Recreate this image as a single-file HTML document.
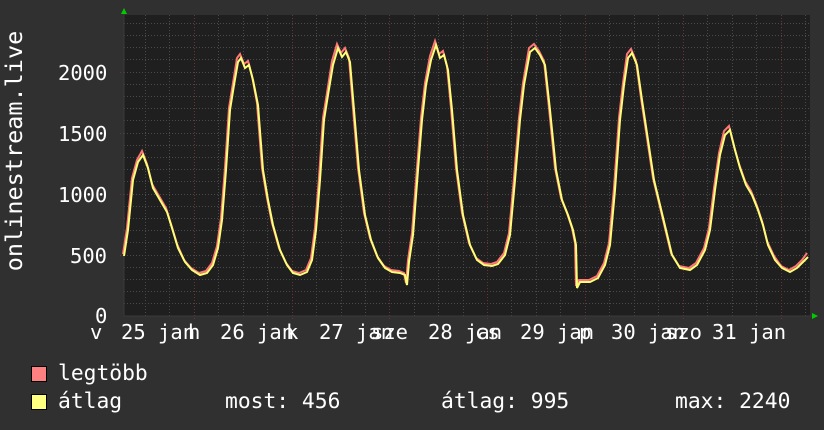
<!DOCTYPE html>
<html><head><meta charset="utf-8"><style>
html,body{margin:0;padding:0;background:#303030;}
body{width:824px;height:430px;overflow:hidden;position:relative;font-family:"DejaVu Sans Mono","Liberation Mono",monospace;color:#fff;}
.t{position:absolute;font-size:20.5px;line-height:1;white-space:pre;}
.l{font-size:21.3px;}
.sw{position:absolute;width:14px;height:14px;border:1px solid #000;}
</style></head><body>
<svg width="824" height="430" style="position:absolute;left:0;top:0">
<rect x="124" y="15" width="686" height="301" fill="#1f1f1f"/>
<g stroke="#4a4a4a" stroke-dasharray="1,2" stroke-width="1">
<line x1="124" x2="810" y1="303.5" y2="303.5"/><line x1="124" x2="810" y1="291.5" y2="291.5"/>
<line x1="124" x2="810" y1="279.5" y2="279.5"/><line x1="124" x2="810" y1="267.5" y2="267.5"/>
<line x1="124" x2="810" y1="255.5" y2="255.5"/><line x1="124" x2="810" y1="242.5" y2="242.5"/>
<line x1="124" x2="810" y1="230.5" y2="230.5"/><line x1="124" x2="810" y1="218.5" y2="218.5"/>
<line x1="124" x2="810" y1="206.5" y2="206.5"/><line x1="124" x2="810" y1="194.5" y2="194.5"/>
<line x1="124" x2="810" y1="181.5" y2="181.5"/><line x1="124" x2="810" y1="169.5" y2="169.5"/>
<line x1="124" x2="810" y1="157.5" y2="157.5"/><line x1="124" x2="810" y1="145.5" y2="145.5"/>
<line x1="124" x2="810" y1="133.5" y2="133.5"/><line x1="124" x2="810" y1="120.5" y2="120.5"/>
<line x1="124" x2="810" y1="108.5" y2="108.5"/><line x1="124" x2="810" y1="96.5" y2="96.5"/>
<line x1="124" x2="810" y1="84.5" y2="84.5"/><line x1="124" x2="810" y1="72.5" y2="72.5"/>
<line x1="124" x2="810" y1="59.5" y2="59.5"/><line x1="124" x2="810" y1="47.5" y2="47.5"/>
<line x1="124" x2="810" y1="35.5" y2="35.5"/><line x1="124" x2="810" y1="23.5" y2="23.5"/>
<line y1="15" y2="316" x1="145.5" x2="145.5"/><line y1="15" y2="316" x1="169.5" x2="169.5"/>
<line y1="15" y2="316" x1="218.5" x2="218.5"/><line y1="15" y2="316" x1="243.5" x2="243.5"/><line y1="15" y2="316" x1="267.5" x2="267.5"/>
<line y1="15" y2="316" x1="316.5" x2="316.5"/><line y1="15" y2="316" x1="341.5" x2="341.5"/><line y1="15" y2="316" x1="365.5" x2="365.5"/>
<line y1="15" y2="316" x1="414.5" x2="414.5"/><line y1="15" y2="316" x1="438.5" x2="438.5"/><line y1="15" y2="316" x1="463.5" x2="463.5"/>
<line y1="15" y2="316" x1="511.5" x2="511.5"/><line y1="15" y2="316" x1="536.5" x2="536.5"/><line y1="15" y2="316" x1="560.5" x2="560.5"/>
<line y1="15" y2="316" x1="609.5" x2="609.5"/><line y1="15" y2="316" x1="634.5" x2="634.5"/><line y1="15" y2="316" x1="658.5" x2="658.5"/>
<line y1="15" y2="316" x1="707.5" x2="707.5"/><line y1="15" y2="316" x1="732.5" x2="732.5"/><line y1="15" y2="316" x1="756.5" x2="756.5"/>
<line y1="15" y2="316" x1="805.5" x2="805.5"/>
</g>
<g stroke="#6a3434" stroke-dasharray="1,2" stroke-width="1">
<line y1="15" y2="320" x1="194.5" x2="194.5"/><line y1="15" y2="320" x1="292.5" x2="292.5"/>
<line y1="15" y2="320" x1="389.5" x2="389.5"/><line y1="15" y2="320" x1="487.5" x2="487.5"/>
<line y1="15" y2="320" x1="585.5" x2="585.5"/><line y1="15" y2="320" x1="683.5" x2="683.5"/>
<line y1="15" y2="320" x1="781.5" x2="781.5"/>
<line x1="120" x2="124" y1="255.5" y2="255.5"/><line x1="120" x2="124" y1="194.5" y2="194.5"/>
<line x1="120" x2="124" y1="133.5" y2="133.5"/><line x1="120" x2="124" y1="72.5" y2="72.5"/>
</g>
<line x1="124" y1="12" x2="124" y2="316" stroke="#3a3a3a"/>
<line x1="124" y1="316" x2="812" y2="316" stroke="#3a3a3a"/>
<polygon points="121,14 127,14 124,8" fill="#00cc00"/>
<polygon points="812,313 812,319 818,316" fill="#00cc00"/>
<polyline fill="none" stroke="#ff7777" stroke-width="2" transform="translate(-1,-2)" points="124,256 128,230 133,180 138,162 143,153 148,166 153,186 160,198 167,210 172,226 178,246 185,262 192,270 200,275 207,273 213,265 218,248 222,220 226,170 230,110 234,85 238,60 241,56 245,66 249,63 253,78 258,105 263,170 268,200 273,225 280,250 287,265 293,273 300,275 307,272 312,260 316,230 320,180 324,120 328,95 333,63 338,46 342,55 346,50 350,60 354,110 359,170 365,215 371,240 378,258 385,268 392,272 400,273 405,275 407,285 409,262 413,235 418,170 422,120 426,85 431,58 436,43 440,56 444,53 448,68 452,110 457,170 463,215 470,245 477,260 484,265 492,266 498,264 505,255 510,235 515,180 520,120 524,85 530,50 535,46 540,53 545,63 550,110 556,170 562,200 568,215 573,230 576,245 577,288 580,282 590,282 598,278 605,265 610,245 615,190 620,120 624,85 628,56 632,51 637,63 642,100 648,140 654,180 660,205 666,230 672,255 680,268 690,270 697,265 705,250 710,230 715,190 720,155 725,133 730,128 735,148 740,166 746,183 752,193 758,208 763,223 768,243 775,258 782,268 790,272 797,268 803,262 808,255"/>
<polyline fill="none" stroke="#ffff77" stroke-width="2" points="124,256 128,230 133,180 138,162 143,155 148,168 153,188 160,200 167,212 172,228 178,248 185,262 192,270 200,275 207,273 213,265 218,248 222,220 226,170 230,110 234,85 238,62 241,58 245,68 249,65 253,80 258,105 263,170 268,200 273,225 280,250 287,265 293,273 300,275 307,272 312,260 316,230 320,180 324,120 328,95 333,65 338,48 342,57 346,52 350,62 354,110 359,170 365,215 371,240 378,258 385,268 392,272 400,273 405,275 407,285 409,262 413,235 418,170 422,120 426,85 431,60 436,45 440,58 444,55 448,70 452,110 457,170 463,215 470,245 477,260 484,265 492,266 498,264 505,255 510,235 515,180 520,120 524,85 530,52 535,48 540,55 545,65 550,110 556,170 562,200 568,215 573,230 576,245 577,288 580,282 590,282 598,278 605,265 610,245 615,190 620,120 624,85 628,58 632,53 637,65 642,100 648,140 654,180 660,205 666,230 672,255 680,268 690,270 697,265 705,250 710,230 715,190 720,155 725,135 730,130 735,150 740,168 746,185 752,195 758,210 763,225 768,245 775,260 782,268 790,272 797,268 803,262 808,257"/>
<text x="14" y="151" fill="#fff" font-family="DejaVu Sans Mono, monospace" font-size="23.5" text-anchor="middle" transform="rotate(-90 14 151)" dominant-baseline="central">onlinestream.live</text>
</svg>
<div class="t" style="left:58px;top:63px">2000</div>
<div class="t" style="left:58px;top:124px">1500</div>
<div class="t" style="left:58px;top:185px">1000</div>
<div class="t" style="left:70px;top:246px">500</div>
<div class="t" style="left:95px;top:306px">0</div>
<div class="t" style="left:90px;top:322px">v</div>
<div class="t" style="left:121px;top:322px">25 jan</div>
<div class="t" style="left:188px;top:322px">h</div>
<div class="t" style="left:220px;top:322px">26 jan</div>
<div class="t" style="left:286px;top:322px">k</div>
<div class="t" style="left:319px;top:322px">27 jan</div>
<div class="t" style="left:371px;top:322px">sze</div>
<div class="t" style="left:428px;top:322px">28 jan</div>
<div class="t" style="left:475px;top:322px">cs</div>
<div class="t" style="left:520px;top:322px">29 jan</div>
<div class="t" style="left:579px;top:322px">p</div>
<div class="t" style="left:611px;top:322px">30 jan</div>
<div class="t" style="left:665px;top:322px">szo</div>
<div class="t" style="left:712px;top:322px">31 jan</div>
<div class="sw" style="left:31px;top:366px;background:#ff8080"></div>
<div class="sw" style="left:31px;top:394px;background:#ffff80"></div>
<div class="t l" style="left:58px;top:363px">legtöbb</div>
<div class="t l" style="left:58px;top:391px">átlag</div>
<div class="t l" style="left:225px;top:391px">most: 456</div>
<div class="t l" style="left:441px;top:391px">átlag: 995</div>
<div class="t l" style="left:675px;top:391px">max: 2240</div>
</body></html>
